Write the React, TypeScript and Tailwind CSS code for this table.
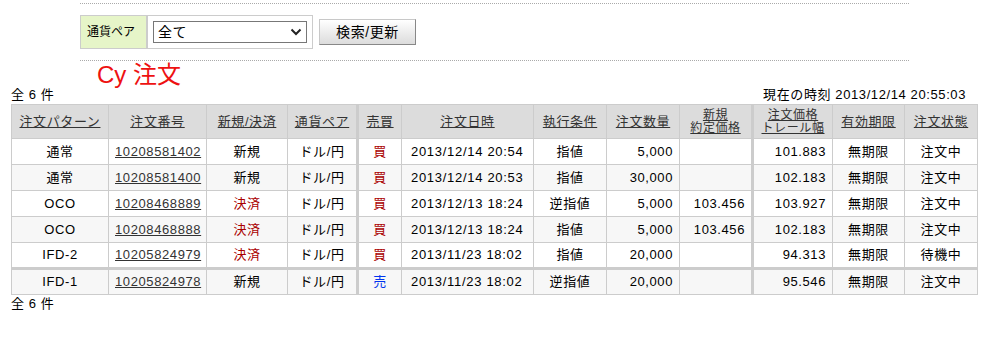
import React from 'react';

interface Order {
  pattern: string;
  no: string;
  kind: string;
  pair: string;
  side: string;
  date: string;
  cond: string;
  qty: string;
  newPrice: string;
  price: string;
  limit: string;
  status: string;
}

const orders: Order[] = [
  { pattern: '通常', no: '10208581402', kind: '新規', pair: 'ドル/円', side: '買', date: '2013/12/14 20:54', cond: '指値', qty: '5,000', newPrice: '', price: '101.883', limit: '無期限', status: '注文中' },
  { pattern: '通常', no: '10208581400', kind: '新規', pair: 'ドル/円', side: '買', date: '2013/12/14 20:53', cond: '指値', qty: '30,000', newPrice: '', price: '102.183', limit: '無期限', status: '注文中' },
  { pattern: 'OCO', no: '10208468889', kind: '決済', pair: 'ドル/円', side: '買', date: '2013/12/13 18:24', cond: '逆指値', qty: '5,000', newPrice: '103.456', price: '103.927', limit: '無期限', status: '注文中' },
  { pattern: 'OCO', no: '10208468888', kind: '決済', pair: 'ドル/円', side: '買', date: '2013/12/13 18:24', cond: '指値', qty: '5,000', newPrice: '103.456', price: '102.183', limit: '無期限', status: '注文中' },
  { pattern: 'IFD-2', no: '10205824979', kind: '決済', pair: 'ドル/円', side: '買', date: '2013/11/23 18:02', cond: '指値', qty: '20,000', newPrice: '', price: '94.313', limit: '無期限', status: '待機中' },
  { pattern: 'IFD-1', no: '10205824978', kind: '新規', pair: 'ドル/円', side: '売', date: '2013/11/23 18:02', cond: '逆指値', qty: '20,000', newPrice: '', price: '95.546', limit: '無期限', status: '注文中' },
];

const th = 'border border-[#cccccc] bg-[#dcdcdc] font-normal text-[#333] px-1 whitespace-nowrap';
const td = 'border border-[#cccccc] px-[6px] whitespace-nowrap';

const App: React.FC = () => {
  return (
    <div className="w-[1002px] h-[338px] bg-white text-[13px] leading-[16px] tracking-[0.6px] text-black" style={{ fontFamily: '"Liberation Sans", "Noto Sans CJK JP", sans-serif' }}>
      {/* Search filter */}
      <div className="ml-[80px] w-[829px] pt-[3px]">
        <div className="border-t border-dotted border-[#aaaaaa]" />
        <div className="flex items-center mt-[11px] h-[34px]">
          <div className="flex items-stretch h-[34px] border border-[#cccccc]">
            <div className="flex items-center px-[6px] w-[67px] bg-[#e6f5c8] text-[12px] tracking-normal border-r-2 border-[#cccccc]">通貨ペア</div>
            <div className="flex items-center px-[5px]">
              <div className="w-[154px] h-[22px] border border-[#777] bg-white flex items-center justify-between pl-[4px] pr-[4px] text-[14px]">
                <span>全て</span>
                <svg width="12" height="8" viewBox="0 0 12 8"><path d="M1.5 1.5 L6 6 L10.5 1.5" fill="none" stroke="#222" strokeWidth="2" /></svg>
              </div>
            </div>
          </div>
          <button className="ml-[6px] w-[97px] h-[26px] text-[14px] border border-[#c8c8c8] border-r-[#888] border-b-[#888] bg-gradient-to-b from-white to-[#dcdcdc]">検索/更新</button>
        </div>
        <div className="mt-[11px] border-t border-dotted border-[#aaaaaa]" />
      </div>

      <div className="pl-[97px] h-[27px] text-[24px] leading-[28px] tracking-normal text-[#ee1111]">Cy 注文</div>

      <div className="flex justify-between items-end w-[977px] pl-[11px] pr-[11px] h-[15px]">
        <span>全 6 件</span>
        <span>現在の時刻 2013/12/14 20:55:03</span>
      </div>

      <table className="ml-[11px] mt-[1px] w-[966px] border-collapse text-center table-fixed">
        <thead>
          <tr className="h-[34px]">
            <th className={`${th} w-[97px]`}><span className="underline">注文パターン</span></th>
            <th className={`${th} w-[98px]`}><span className="underline">注文番号</span></th>
            <th className={`${th} w-[81px]`}><span className="underline">新規/決済</span></th>
            <th className={`${th} w-[70px]`}><span className="underline">通貨ペア</span></th>
            <th className={`${th} w-[44px] border-l-[3px]`}><span className="underline">売買</span></th>
            <th className={`${th} w-[132px]`}><span className="underline">注文日時</span></th>
            <th className={`${th} w-[73px]`}><span className="underline">執行条件</span></th>
            <th className={`${th} w-[73px]`}><span className="underline">注文数量</span></th>
            <th className={`${th} w-[73px] text-[12px] leading-[13px]`}><span className="underline">新規<br />約定価格</span></th>
            <th className={`${th} w-[80px] border-l-[3px] text-[12px] leading-[13px]`}><span className="underline">注文価格<br />トレール幅</span></th>
            <th className={`${th} w-[72px]`}><span className="underline">有効期限</span></th>
            <th className={`${th} w-[73px]`}><span className="underline">注文状態</span></th>
          </tr>
        </thead>
        <tbody>
          {orders.map((o, i) => (
            <tr key={o.no} className={`h-[26px] ${i % 2 === 1 ? 'bg-[#f7f7f7]' : 'bg-white'} ${i === 5 ? 'border-t-[3px] border-[#cccccc]' : ''}`}>
              <td className={td}>{o.pattern}</td>
              <td className={td}><span className="underline text-[#333]">{o.no}</span></td>
              <td className={`${td} ${o.kind === '決済' ? 'text-[#aa0000]' : ''}`}>{o.kind}</td>
              <td className={td}>{o.pair}</td>
              <td className={`${td} border-l-[3px] ${o.side === '買' ? 'text-[#aa0000]' : 'text-[#0033ee]'}`}>{o.side}</td>
              <td className={`${td} text-left pl-[9px] pr-0 tracking-[0.7px]`}>{o.date}</td>
              <td className={td}>{o.cond}</td>
              <td className={`${td} text-right`}>{o.qty}</td>
              <td className={`${td} text-right`}>{o.newPrice}</td>
              <td className={`${td} text-right border-l-[3px]`}>{o.price}</td>
              <td className={td}>{o.limit}</td>
              <td className={td}>{o.status}</td>
            </tr>
          ))}
        </tbody>
      </table>

      <div className="pl-[11px] mt-[1px]">全 6 件</div>
    </div>
  );
};

export default App;
